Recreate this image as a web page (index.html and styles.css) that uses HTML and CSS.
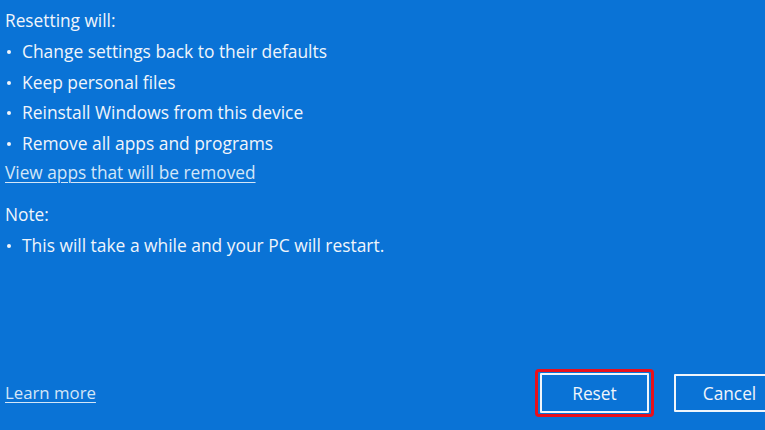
FILE: index.html
```html
<!DOCTYPE html>
<html>
<head>
<meta charset="utf-8">
<link rel="stylesheet" href="styles.css">
</head>
<body>
<div class="page">
  <div class="content">
    <p class="heading">Resetting will:</p>
    <ul class="list">
      <li>Change settings back to their defaults</li>
      <li>Keep personal files</li>
      <li>Reinstall Windows from this device</li>
      <li>Remove all apps and programs</li>
    </ul>
    <a class="link" href="#">View apps that will be removed</a>
    <p class="heading note">Note:</p>
    <ul class="list">
      <li>This will take a while and your PC will restart.</li>
    </ul>
  </div>
  <div class="footer">
    <a class="link" href="#">Learn more</a>
    <div class="buttons">
      <div class="highlight"><button class="btn">Reset</button></div>
      <button class="btn cancel">Cancel</button>
    </div>
  </div>
</div>
</body>
</html>
```

FILE: styles.css
```css
html, body {
  margin: 0;
  padding: 0;
}
body {
  width: 765px;
  height: 430px;
  overflow: hidden;
  background: #0a73d6;
  font-family: "Open Sans", "Noto Sans", sans-serif;
  color: #f0f5fb;
}
.page {
  height: 430px;
  display: flex;
  flex-direction: column;
  justify-content: space-between;
}
.content {
  padding: 6px 0 0 5px;
}
.heading {
  margin: 0;
  font-size: 17.3px;
  line-height: 30px;
}
.note {
  margin-top: 12px;
}
.list {
  list-style: none;
  margin: 0;
  padding: 0;
}
.list li {
  position: relative;
  padding-left: 17px;
  font-size: 17.4px;
  line-height: 30.6px;
}
.list li::before {
  content: "";
  position: absolute;
  left: 2px;
  top: 14px;
  width: 4px;
  height: 4px;
  border-radius: 50%;
  background: #f0f5fb;
}
.link {
  display: inline-block;
  color: #d3e6f8;
  font-size: 17.3px;
  line-height: 30px;
  text-decoration: underline;
  text-underline-offset: 3px;
  text-decoration-thickness: 1px;
}
.footer .link {
  font-size: 16.8px;
}
.footer {
  display: flex;
  justify-content: space-between;
  align-items: center;
  padding: 0 0 13px 5px;
}
.buttons {
  display: flex;
  align-items: center;
  gap: 20px;
  margin-right: -20px;
}
.highlight {
  border: 3px solid #e8101c;
  border-radius: 4px;
  padding: 1px 2px;
}
.btn {
  width: 109px;
  height: 40px;
  background: #0a73d6;
  border: 2px solid #f0f5fb;
  border-radius: 1px;
  color: #f0f5fb;
  font-family: "Open Sans", "Noto Sans", sans-serif;
  font-size: 17.3px;
  padding: 0;
}
.cancel {
  width: 111px;
  height: 38px;
}
```
